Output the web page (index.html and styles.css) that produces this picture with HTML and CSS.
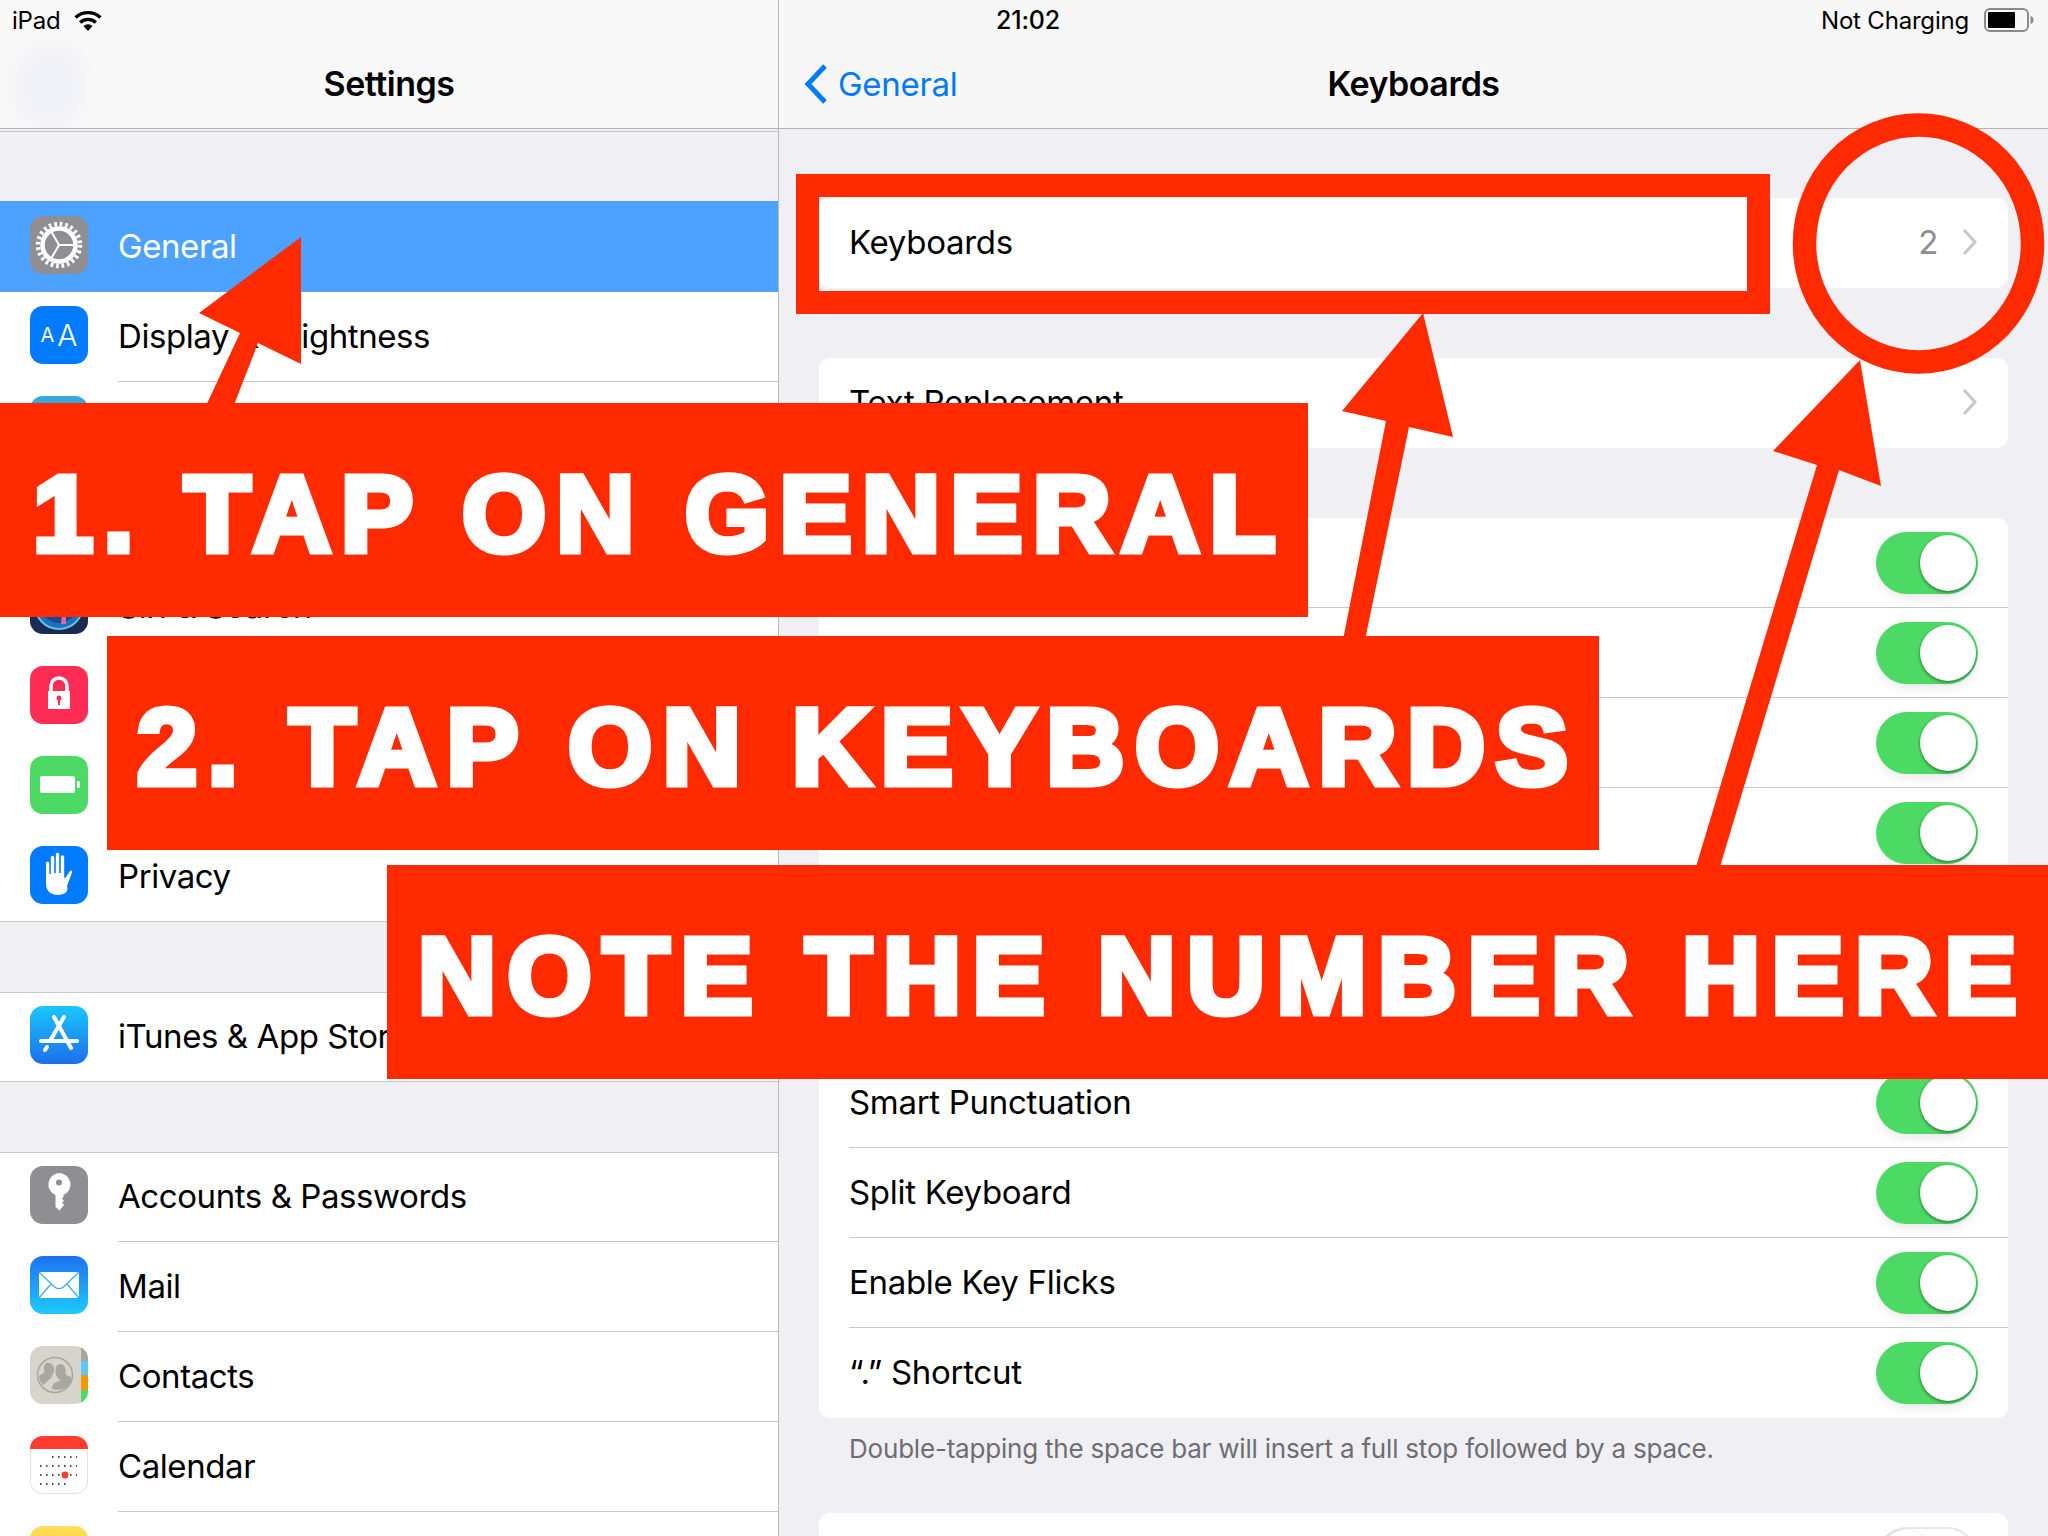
FILE: index.html
```html
<!DOCTYPE html>
<html lang="en">
<head>
<meta charset="utf-8">
<title>Keyboards</title>
<link rel="stylesheet" href="styles.css">
</head>
<body>
<main class="screen">
  <section class="master">
    <header class="nav nav-master">
      <div class="status">
        <span>iPad</span>
        <svg class="wifi" viewBox="0 0 28 22"><path d="M14 22 9.600 17.200a6.500 6.500 0 0 1 8.800 0z"/><path d="M7.600 15a9.500 9.500 0 0 1 12.800 0l2.200-2.400a12.900 12.900 0 0 0-17.200 0z"/><path d="M3.200 10.200a16 16 0 0 1 21.600 0L27 7.800a19.400 19.400 0 0 0-26 0z"/></svg>
      </div>
      <h1 class="title">Settings</h1>
    </header>
    <div class="master-top"></div>
    <div class="list">
      <div class="row selected">
        <span class="icon"><svg viewBox="0 0 58 58"><rect width="58" height="58" fill="#8e8e93"/><circle cx="29" cy="29" r="21" fill="none" stroke="#fff" stroke-width="4.500" stroke-dasharray="2.750 2.750"/><circle cx="29" cy="29" r="16.500" fill="none" stroke="#fff" stroke-width="4.500"/><path d="M29 29 45 29M29 29 21 15.100M29 29 21 42.900" stroke="#fff" stroke-width="2" fill="none"/></svg></span>
        <span class="cell">General</span>
      </div>
      <div class="row">
        <span class="icon icon-blue icon-aa"><span class="aa-small">A</span><span class="aa-big">A</span></span>
        <span class="cell">Display &amp; Brightness</span>
      </div>
      <div class="row">
        <span class="icon icon-wallpaper"></span>
        <span class="cell"></span>
      </div>
      <div class="row">
        <span class="icon icon-sounds"></span>
        <span class="cell"></span>
      </div>
      <div class="row">
        <span class="icon icon-siri"><svg viewBox="0 0 58 58"><circle cx="29" cy="29" r="24" fill="#1f6fc0" stroke="#5fc7d8" stroke-width="2"/><circle cx="29" cy="29" r="18" fill="#174a96"/><path d="M35 12 36 48 31 48z" fill="#e667a8"/></svg></span>
        <span class="cell">Siri &amp; Search</span>
      </div>
      <div class="row">
        <span class="icon icon-lock"><svg viewBox="0 0 58 58"><path d="M21 26v-6a8 8 0 0 1 16 0v6" fill="none" stroke="#fff" stroke-width="3.500"/><rect x="18" y="25" width="22" height="18" fill="#fff"/><circle cx="29" cy="32" r="2.500" fill="#ff2d55"/><rect x="28" y="32" width="2" height="7" fill="#ff2d55"/></svg></span>
        <span class="cell"></span>
      </div>
      <div class="row">
        <span class="icon icon-battery"><svg viewBox="0 0 58 58"><rect x="10" y="20" width="35" height="17" rx="2" fill="#fff"/><path d="M47 25h1a2 2 0 0 1 2 2v3a2 2 0 0 1-2 2h-1z" fill="#fff"/></svg></span>
        <span class="cell"></span>
      </div>
      <div class="row last">
        <span class="icon icon-blue"><svg viewBox="0 0 58 58"><path fill="#fff" d="M16 17a1.700 1.700 0 0 1 3.300 0v11h1.500V11.500a1.700 1.700 0 0 1 3.400 0V27h1.600V8.500a1.700 1.700 0 0 1 3.400 0V27h1.600V11a1.700 1.700 0 0 1 3.400 0v20c0 1 .9 1.300 1.500.5l4-6c1.300-1.700 3-.9 2.500.6l-5.200 14C39 46 34 49 28 49c-7 0-12-4-12-11z"/></svg></span>
        <span class="cell">Privacy</span>
      </div>
    </div>
    <div class="list list-gap">
      <div class="row last">
        <span class="icon icon-appstore"><svg viewBox="0 0 58 58"><path d="M34 11 20 35M24 11 41 42M11 35H47" fill="none" stroke="#fff" stroke-width="4" stroke-linecap="round"/><path d="M17 41l-2 3" stroke="#fff" stroke-width="4" stroke-linecap="round"/></svg></span>
        <span class="cell">iTunes &amp; App Store</span>
      </div>
    </div>
    <div class="list list-gap">
      <div class="row">
        <span class="icon icon-gray"><svg viewBox="0 0 58 58"><path fill="#fff" fill-rule="evenodd" d="M29 7a11.500 11.500 0 0 1 4.500 22.100V31l-1.500 1.500 2 2.500-2 1.500 2 2.500-4.500 5.500-4-3.500V29.100A11.500 11.500 0 0 1 29 7zm0 6.500a3 3 0 1 0 0 6 3 3 0 0 0 0-6z"/></svg></span>
        <span class="cell">Accounts &amp; Passwords</span>
      </div>
      <div class="row">
        <span class="icon icon-mail"><svg viewBox="0 0 58 58"><rect x="9" y="16" width="40" height="26" fill="#fff"/><path d="M9 16 24 30.500a7 7 0 0 0 10 0L49 16M9 42 21 28M49 42 37 28" fill="none" stroke="#38a8f8" stroke-width="1.200"/></svg></span>
        <span class="cell">Mail</span>
      </div>
      <div class="row">
        <span class="icon icon-contacts"><svg viewBox="0 0 58 58"><rect x="51" width="7" height="15" fill="#a8a59c"/><rect x="51" y="15" width="7" height="14" fill="#5ac8fa"/><rect x="51" y="29" width="7" height="15" fill="#ff9500"/><rect x="51" y="44" width="7" height="14" fill="#4cd964"/><circle cx="25" cy="29" r="17.500" fill="none" stroke="#aba69f" stroke-width="1.500"/><path fill="#aba69f" d="M18 17c3.500 0 6 2.500 6 6.500 0 3-1 5-2 6.500l-1 2-8 7c-2-2.500-4-5.500-4-9 1-1 3-2 5-3 1-1 0-2 0-4 0-3.500 1-6.500 4-6.500z"/><path fill="#aba69f" d="M30 18c3.500 0 5.500 2.500 5.500 6.500 0 2.500 0 3.500 1 4.500 1 1 4 1.500 5 3-.5 5-3.500 8.500-7 10.500-3 1.500-9 2-13 0l2-5 7-3c-2.500-1.500-4-4-5-7 0-6 1-9.500 4.500-9.500z"/></svg></span>
        <span class="cell">Contacts</span>
      </div>
      <div class="row">
        <span class="icon icon-calendar"><svg viewBox="0 0 58 58"><rect width="58" height="13" fill="#ff3b30"/><g stroke="#111" stroke-width="1.500" stroke-dasharray="1.500 4.500" fill="none"><path d="M22 21H47M10 30H47M10 39H31M40 39H47M10 48H36"/></g><circle cx="35" cy="39" r="3.500" fill="#ff3b30"/></svg></span>
        <span class="cell">Calendar</span>
      </div>
      <div class="row">
        <span class="icon icon-notes"></span>
        <span class="cell"></span>
      </div>
    </div>
  </section>

  <section class="detail">
    <header class="nav nav-detail">
      <div class="status status-detail">
        <span class="time">21:02</span>
        <span class="power">Not Charging
          <svg class="battery" viewBox="0 0 50 24"><rect x="1" y="1" width="43" height="22" rx="5" fill="none" stroke="#8a8a8e" stroke-width="2"/><rect x="4" y="4" width="27" height="16" rx="1" fill="#000"/><path d="M46.500 8c2 .5 3 2 3 4s-1 3.500-3 4z" fill="#8a8a8e"/></svg>
        </span>
      </div>
      <div class="nav-bar">
        <a class="back"><svg class="back-chevron" viewBox="0 0 26 42"><path d="M22 3 5 21l17 18" fill="none" stroke="#007aff" stroke-width="5"/></svg>General</a>
        <h1 class="title">Keyboards</h1>
        <span></span>
      </div>
    </header>
    <div class="content">
      <div class="card">
        <div class="setting"><div class="setting-in"><span>Keyboards</span><span class="value">2<svg class="chev" viewBox="0 0 16 28"><path d="M2 2l11 12L2 26" fill="none" stroke="#c7c7cc" stroke-width="3"/></svg></span></div></div>
      </div>
      <div class="card">
        <div class="setting"><div class="setting-in"><span>Text Replacement</span><span class="value"><svg class="chev" viewBox="0 0 16 28"><path d="M2 2l11 12L2 26" fill="none" stroke="#c7c7cc" stroke-width="3"/></svg></span></div></div>
      </div>
      <div class="card">
        <div class="setting"><div class="setting-in"><span></span><i class="toggle"></i></div></div>
        <div class="setting"><div class="setting-in"><span></span><i class="toggle"></i></div></div>
        <div class="setting"><div class="setting-in"><span></span><i class="toggle"></i></div></div>
        <div class="setting"><div class="setting-in"><span></span><i class="toggle"></i></div></div>
        <div class="setting"><div class="setting-in"><span></span><i class="toggle"></i></div></div>
        <div class="setting"><div class="setting-in"><span></span><i class="toggle"></i></div></div>
        <div class="setting"><div class="setting-in"><span>Smart Punctuation</span><i class="toggle"></i></div></div>
        <div class="setting"><div class="setting-in"><span>Split Keyboard</span><i class="toggle"></i></div></div>
        <div class="setting"><div class="setting-in"><span>Enable Key Flicks</span><i class="toggle"></i></div></div>
        <div class="setting"><div class="setting-in"><span>“.” Shortcut</span><i class="toggle"></i></div></div>
      </div>
      <p class="foot">Double-tapping the space bar will insert a full stop followed by a space.</p>
      <div class="card">
        <div class="setting"><div class="setting-in"><span></span><i class="toggle off"></i></div></div>
      </div>
    </div>
  </section>

  <svg class="marks" viewBox="0 0 2048 1536">
    <rect x="807.500" y="185.500" width="951" height="117" fill="none" stroke="#ff2a00" stroke-width="23"/>
    <ellipse cx="1918.500" cy="243.500" rx="114" ry="118.500" fill="none" stroke="#ff2a00" stroke-width="23.500"/>
    <polygon fill="#ff2a00" points="301,237 301,364 258,343 232,410 204,410 240,333 199,313"/>
    <polygon fill="#ff2a00" points="1423,313 1453,437 1409,427 1365,640 1343,640 1386,421 1342,411"/>
    <polygon fill="#ff2a00" points="1860,360 1881,486 1839,470 1719,870 1695,870 1817,465 1773,451"/>
  </svg>
  <div class="banner banner-1"><span>1. TAP ON GENERAL</span></div>
  <div class="banner banner-2"><span>2. TAP ON KEYBOARDS</span></div>
  <div class="banner banner-3"><span>NOTE THE NUMBER HERE</span></div>
</main>
</body>
</html>
```
FILE: styles.css
```css
* { box-sizing: border-box; }
html, body { margin: 0; padding: 0; }
body { background: #efeff4; font-family: Inter, "Noto Sans", sans-serif; color: #000; }
h1 { margin: 0; }
p { margin: 0; }

.screen { position: relative; display: flex; width: 2048px; height: 1536px; overflow: hidden; background: #efeff4; }

.master { flex: 0 0 779px; border-right: 1px solid #b9b9bd; height: 1536px; overflow: hidden; }
.detail { flex: 1; height: 1536px; overflow: hidden; }

.nav { height: 129px; background: #f7f7f8; border-bottom: 1px solid #b2b2b2; }
.nav-master { background: radial-gradient(ellipse 45px 50px at 50px 85px, #f2f2f9 60%, rgba(247,247,248,0) 100%), #f8f8f8; }
.status { height: 40px; display: flex; align-items: center; gap: 12px; padding-left: 12px; font-size: 24px; letter-spacing: -.2px; }
.wifi { width: 30px; height: 23px; margin-top: -2px; }
.status-detail { justify-content: space-between; padding-left: 217px; padding-right: 14px; }
.time { font-weight: 500; font-size: 25px; }
.power { display: flex; align-items: center; gap: 15px; }
.battery { width: 50px; height: 24px; }

.title { font-size: 34px; font-weight: 600; line-height: 88px; text-align: center; letter-spacing: -.5px; }
.nav-bar { display: grid; grid-template-columns: 1fr auto 1fr; align-items: center; height: 88px; }
.back { display: flex; align-items: center; gap: 9px; margin-left: 24px; color: #007aff; font-size: 33px; letter-spacing: -.3px; }
.back-chevron { width: 26px; height: 42px; }

.master-top { height: 72px; box-shadow: inset 0 2px #efeff4, inset 0 3px #c8c7cc; }
.list { background: #fff; box-shadow: inset 0 1px #c8c7cc, inset 0 -1px #c8c7cc; }
.list-gap { margin-top: 70px; }
.row { display: flex; align-items: flex-start; height: 90px; padding-left: 30px; font-size: 33px; letter-spacing: -.42px; }
.row.selected { height: 91px; background: #4da2ff; color: #fff; }
.row.selected .icon { margin-top: 15px; }
.row.selected .cell { border-bottom: 0; }
.row.last .cell { border-bottom: 0; }
.cell { flex: 1; height: 100%; margin-left: 30px; display: flex; align-items: center; padding-bottom: 2px; border-bottom: 1px solid #c8c7cc; }

.icon { position: relative; flex: 0 0 58px; width: 58px; height: 58px; margin-top: 14px; border-radius: 13px; overflow: hidden; }
.icon svg { display: block; width: 58px; height: 58px; }
.icon-aa { display: flex; align-items: center; justify-content: center; gap: 3px; color: #fff; font-weight: 400; }
.icon-blue { background: #007aff; }
.icon-wallpaper { background: #34aadc; }
.icon-sounds { background: #ff2d55; }
.icon-siri { background: #1c2a55; }
.icon-lock { background: #ff2d55; }
.icon-battery { background: #4cd964; }
.icon-gray { background: #8e8e93; }
.icon-appstore { background: linear-gradient(#1bc6ff, #1d6fe9); }
.icon-mail { background: linear-gradient(#1d72f0, #1ecbfd); }
.icon-contacts { background: #d7d4cc; }
.icon-calendar { background: #fff; box-shadow: inset 0 0 0 1px #e2e2e2; }
.icon-notes { background: linear-gradient(#ffdf5c, #ffcc00); }
.aa-small { font-size: 20px; line-height: 1; letter-spacing: 0; }
.aa-big { font-size: 30px; line-height: 1; letter-spacing: 0; font-weight: 300; }

.content { padding: 69px 40px 0 40px; }
.card { background: #fff; border-radius: 11px; margin-bottom: 70px; }
.setting { height: 90px; padding-left: 30px; font-size: 33px; letter-spacing: -.3px; }
.setting-in { display: flex; align-items: center; justify-content: space-between; height: 100%; padding-right: 30px; padding-bottom: 2px; border-bottom: 1px solid #c8c7cc; }
.card .setting:last-child .setting-in { border-bottom: 0; }
.value { display: flex; align-items: center; gap: 24px; color: #8e8e93; }
.chev { width: 16px; height: 28px; }
.toggle { position: relative; display: block; width: 102px; height: 62px; margin-top: 2px; border-radius: 31px; background: #4cd964; box-shadow: 0 8px 14px -6px rgba(0,0,0,.12); }
.toggle::after { content: ""; position: absolute; top: 3px; right: 2px; width: 56px; height: 56px; border-radius: 50%; background: #fff; box-shadow: 0 2px 3px rgba(0,0,0,.35), -1px 0 2px rgba(0,0,0,.12); }
.toggle.off { background: #fff; box-shadow: inset 0 0 0 2px #e5e5ea; }
.toggle.off::after { left: 2px; right: auto; }
.foot { margin: -70px 0 0; height: 95px; padding: 16px 0 0 30px; font-size: 26px; line-height: 30px; color: #6d6d72; letter-spacing: -.2px; }

.marks { position: absolute; left: 0; top: 0; width: 2048px; height: 1536px; }
.banner { position: absolute; height: 214px; display: flex; align-items: center; background: #ff2a00; color: #fff; font-family: "Liberation Sans", Arial, sans-serif; font-weight: 700; font-size: 108px; white-space: nowrap; -webkit-text-stroke: 7px #fff; }
.banner span { position: relative; top: 3px; }
.banner-1 { left: 0; top: 403px; width: 1308px; padding-left: 33px; letter-spacing: 10.400px; }
.banner-2 { left: 107px; top: 636px; width: 1492px; padding-left: 30px; letter-spacing: 10.700px; }
.banner-3 { left: 387px; top: 865px; width: 1661px; padding-left: 31px; letter-spacing: 11.500px; }
```
